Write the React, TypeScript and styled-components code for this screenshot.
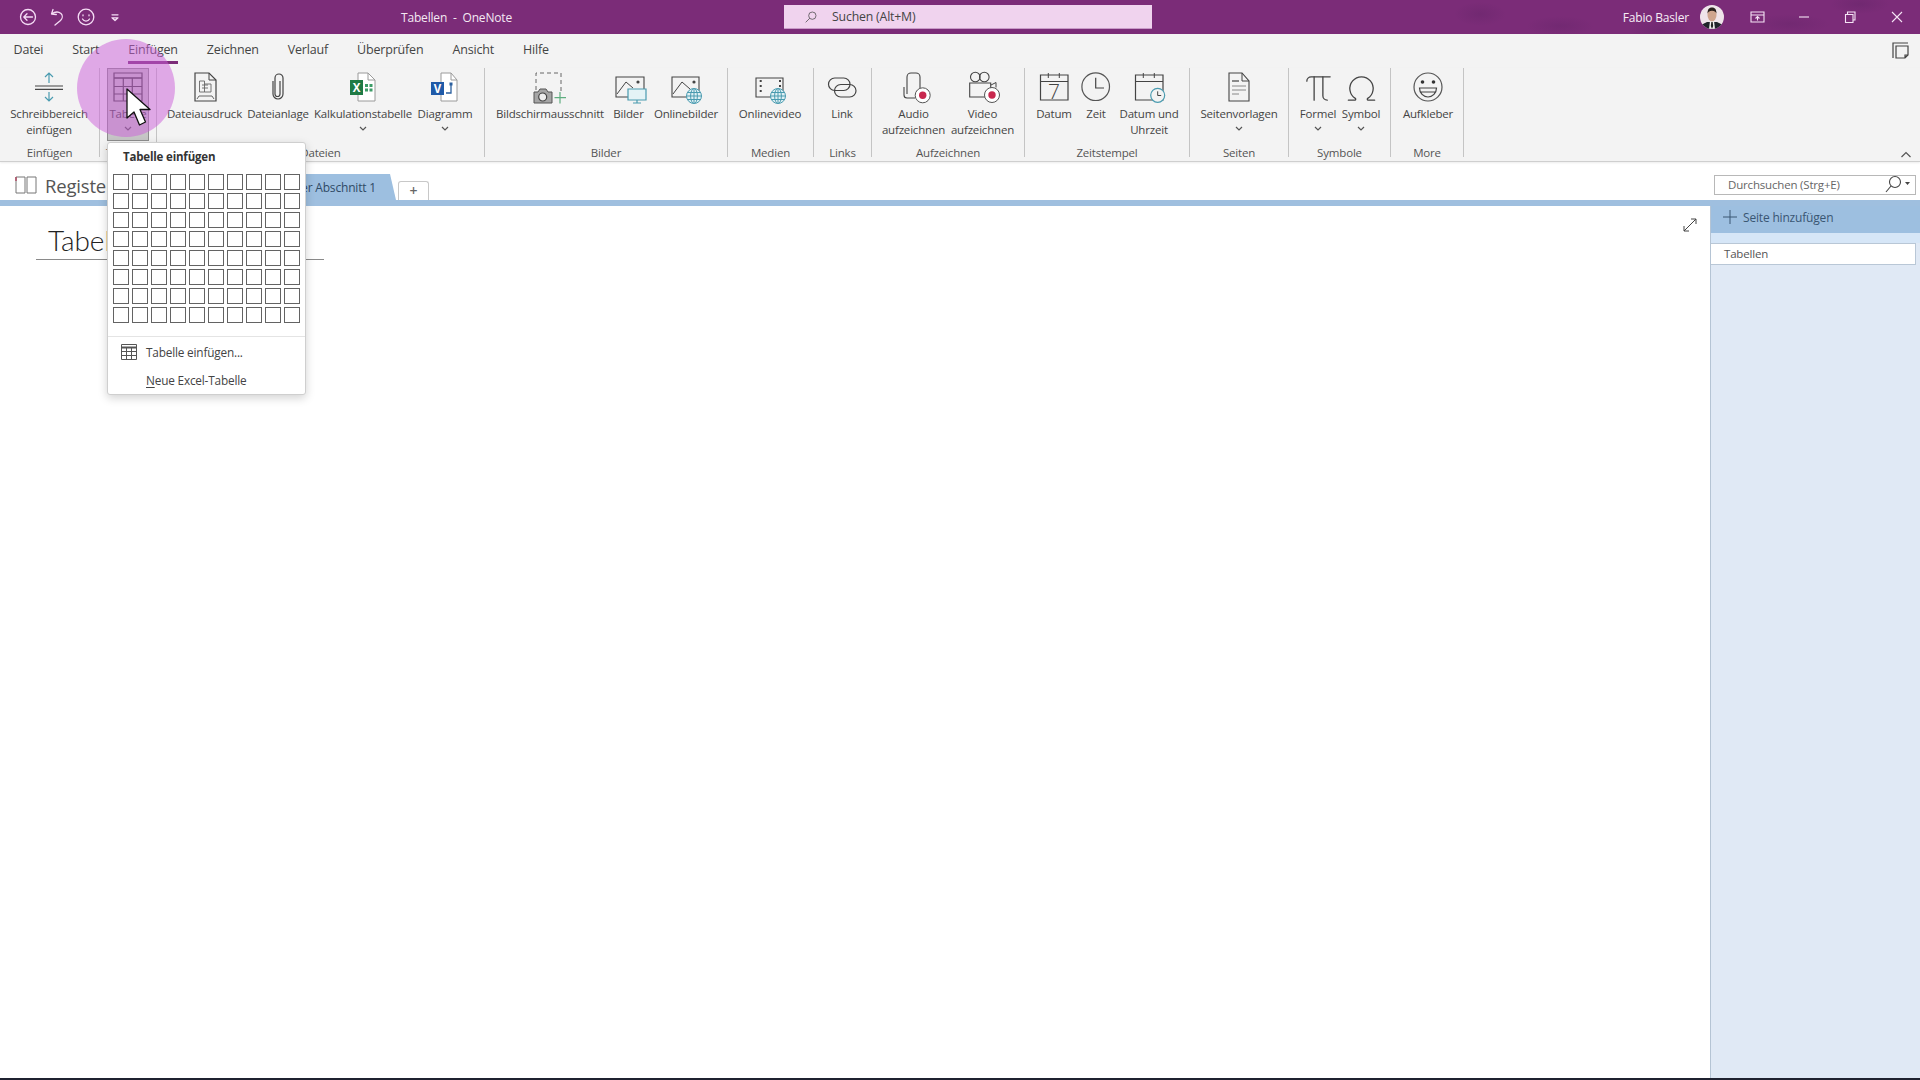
import React from "react";
import styled, { createGlobalStyle } from "styled-components";
import { Omega, Pi } from "lucide-react";

const GlobalStyle = createGlobalStyle`
  html, body {
    margin: 0;
    padding: 0;
    background: #fff;
  }
  body {
    font-family: "Open Sans", "Noto Sans", sans-serif;
    overflow: hidden;
  }
`;

const Window = styled.div`
  position: relative;
  display: flex;
  flex-direction: column;
  width: 1920px;
  height: 1080px;
  overflow: hidden;
  background: #fff;
  color: #444;
  font-size: 11.5px;
  letter-spacing: -0.18px;
`;

const TitleBar = styled.header`
  display: flex;
  align-items: center;
  flex: 0 0 34px;
  background:
    radial-gradient(ellipse 26px 12px at 1480px 14px, rgba(50, 20, 70, 0.13), transparent),
    radial-gradient(ellipse 34px 10px at 1560px 26px, rgba(50, 20, 70, 0.12), transparent),
    radial-gradient(ellipse 30px 14px at 1660px 30px, rgba(50, 20, 70, 0.14), transparent),
    radial-gradient(ellipse 40px 10px at 1790px 24px, rgba(50, 20, 70, 0.12), transparent),
    radial-gradient(ellipse 30px 10px at 1860px 4px, rgba(50, 20, 70, 0.14), transparent),
    #7b2c78;
  color: #fff;
`;

const QuickAccess = styled.div`
  display: flex;
  align-items: center;
  flex: none;
  gap: 5px;
  width: 401px;
  padding-left: 16px;
  box-sizing: border-box;
`;

const QuickIcon = styled.svg`
  width: 24px;
  height: 24px;
  fill: none;
  stroke: #f5dcf5;
  stroke-width: 1.3;
  stroke-linecap: round;
  stroke-linejoin: round;
`;

const WindowTitle = styled.div`
  flex: none;
  width: 383px;
  font-size: 12px;
  white-space: pre;
  color: #f4e9f3;
`;

const SearchBox = styled.div`
  display: flex;
  align-items: center;
  flex: none;
  gap: 13px;
  width: 368px;
  height: 24px;
  box-sizing: border-box;
  padding-left: 19px;
  background: #f0d3ee;
  border-bottom: 1px solid #c99bc8;
  color: #444;
  font-size: 12.3px;
`;

const UserArea = styled.div`
  display: flex;
  align-items: center;
  flex: none;
  margin-left: auto;
  color: #f7edf6;
  font-size: 12px;
  white-space: nowrap;
`;

const Avatar = styled.svg`
  width: 24px;
  height: 24px;
  margin-left: 11px;
  margin-right: 10px;
`;

const WindowButton = styled.svg`
  width: 46.5px;
  height: 20px;
  fill: none;
  stroke: #f5e4f5;
  stroke-width: 1.1;
`;

const TabRow = styled.nav`
  position: relative;
  display: flex;
  flex: 0 0 34px;
  gap: 29px;
  padding-left: 13.5px;
  background: #f3f3f3;
`;

const Tab = styled.div<{ $active?: boolean }>`
  position: relative;
  line-height: 31px;
  font-size: 12.5px;
  color: #444;
  &::after {
    content: "";
    display: ${(props) => (props.$active ? "block" : "none")};
    position: absolute;
    left: 0;
    right: 0;
    top: 27px;
    height: 3px;
    background: #7b2c78;
  }
`;

const NoteButton = styled.svg`
  position: absolute;
  right: 11px;
  top: 8px;
  width: 17px;
  height: 17px;
  fill: none;
  stroke: #444;
  stroke-width: 1.2;
`;

const Ribbon = styled.section`
  position: relative;
  display: flex;
  flex: 0 0 94px;
  background: #f3f3f3;
  border-bottom: 1px solid #cfcfcf;
  box-shadow: 0 1px 2px rgba(0, 0, 0, 0.08);
  box-sizing: border-box;
  z-index: 1;
`;

const Group = styled.div<{ $w: number }>`
  position: relative;
  width: ${(props) => props.$w}px;
  height: 89px;
  box-sizing: border-box;
  flex: none;
  border-right: 1px solid #c4c4c4;
`;

const Buttons = styled.div<{ $pad: number }>`
  display: flex;
  height: 73px;
  padding-left: ${(props) => props.$pad}px;
`;

const GroupLabel = styled.div`
  height: 16px;
  line-height: 16px;
  text-align: center;
  font-size: 11.5px;
  color: #555;
  margin-top: 4px;
`;

const RibbonButton = styled.div<{ $w: number; $pressed?: boolean }>`
  display: flex;
  flex-direction: column;
  align-items: center;
  flex: none;
  width: ${(props) => props.$w}px;
  height: 73px;
  box-sizing: border-box;
  text-align: center;
  line-height: 16px;
  white-space: nowrap;
  background: ${(props) => (props.$pressed ? "#c6c6c6" : "transparent")};
  outline: ${(props) => (props.$pressed ? "1px solid #8d8d8d" : "none")};
  outline-offset: -1px;
`;

const IconSlot = styled.svg`
  flex: none;
  width: 36px;
  height: 36px;
  margin: 2px 0 0;
  fill: none;
  stroke: #444;
  stroke-width: 1.2;
  overflow: visible;
`;

const LucideSlot = styled.div`
  display: flex;
  justify-content: center;
  align-items: center;
  flex: none;
  height: 36px;
  margin-top: 2px;
  color: #444;
`;

const Chevron = styled.svg`
  width: 8px;
  height: 16px;
  fill: none;
  stroke: #555;
  stroke-width: 1.2;
`;

const Collapse = styled.svg`
  position: absolute;
  right: 8px;
  bottom: 1px;
  width: 12px;
  height: 10px;
  fill: none;
  stroke: #555;
  stroke-width: 1.2;
`;

const SectionRow = styled.div`
  display: flex;
  align-items: flex-end;
  flex: 0 0 38px;
  box-sizing: border-box;
  padding-left: 14px;
  position: relative;
  background: #fff;
`;

const BookIcon = styled.svg`
  align-self: center;
  flex: none;
  width: 24px;
  height: 20px;
  margin-top: 8px;
  fill: none;
  stroke: #777;
  stroke-width: 1;
`;

const NotebookName = styled.div`
  align-self: center;
  margin-top: 8px;
  width: 181px;
  margin-left: 7px;
  font-size: 18.5px;
  color: #555;
`;

const SectionTab = styled.div`
  width: 170px;
  height: 26px;
  box-sizing: border-box;
  line-height: 27px;
  padding-right: 20px;
  text-align: right;
  background: #9dbfe0;
  color: #2f4a66;
  font-size: 12px;
  clip-path: polygon(0 0, 164px 0, 170px 26px, 0 26px);
`;

const AddTab = styled.div`
  width: 31px;
  height: 19px;
  margin-left: 2px;
  box-sizing: border-box;
  border: 1px solid #c8c8c8;
  border-bottom: none;
  border-radius: 3px 3px 0 0;
  text-align: center;
  line-height: 18px;
  font-size: 14px;
  font-weight: 600;
  color: #666;
`;

const PageSearch = styled.div`
  position: absolute;
  left: 1714px;
  top: 13px;
  display: flex;
  align-items: center;
  justify-content: space-between;
  width: 202px;
  height: 20px;
  box-sizing: border-box;
  padding: 0 2px 2px 13px;
  border: 1px solid #b8b8b8;
  font-size: 11.5px;
  color: #666;
`;

const SearchGlyph = styled.svg<{ $w: number }>`
  flex: none;
  width: ${(props) => props.$w}px;
  height: 18px;
  fill: none;
  stroke: #444;
  stroke-width: 1.1;
`;

const Stripe = styled.div`
  flex: 0 0 6px;
  background: #9fbfdf;
`;

const Content = styled.div`
  display: flex;
  flex: 1;
  min-height: 0;
`;

const PageArea = styled.main`
  position: relative;
  flex: 1;
  padding: 15px 0 0 36px;
  background: #fff;
`;

const PageTitle = styled.div`
  width: 288px;
  height: 39px;
  box-sizing: border-box;
  padding-left: 12px;
  border-bottom: 1px solid #8a8a8a;
  font-family: "Lato", "Open Sans", sans-serif;
  font-weight: 300;
  font-size: 28px;
  line-height: 39px;
  letter-spacing: 0;
  color: #222;
`;

const ExpandIcon = styled.svg`
  position: absolute;
  right: 12px;
  top: 11px;
  width: 16px;
  height: 16px;
  fill: none;
  stroke: #444;
  stroke-width: 1;
`;

const PageList = styled.aside`
  flex: 0 0 210px;
  box-sizing: border-box;
  border-left: 1px solid #b5c4d4;
  background: #e0e9f5;
`;

const AddPage = styled.div`
  display: flex;
  align-items: center;
  gap: 5px;
  height: 27px;
  box-sizing: border-box;
  padding: 0 0 5px 11px;
  background: #9dbfe0;
  color: #3a5673;
  font-size: 12px;
`;

const PageGap = styled.div`
  height: 10px;
  background: #d6e6f7;
`;

const PageItem = styled.div`
  width: 205px;
  height: 22px;
  box-sizing: border-box;
  padding-left: 13px;
  line-height: 19px;
  background: #fff;
  border: 1px solid #b9c7d6;
  border-left: none;
  color: #555;
  font-size: 11.5px;
`;

const BottomEdge = styled.div`
  flex: 0 0 2px;
  background: #1f2230;
`;

const Highlight = styled.div`
  position: absolute;
  left: 77px;
  top: 39px;
  width: 98px;
  height: 98px;
  border-radius: 50%;
  background: rgba(203, 93, 217, 0.5);
  z-index: 2;
`;

const Cursor = styled.svg`
  position: absolute;
  left: 124px;
  top: 86px;
  width: 30px;
  height: 44px;
  z-index: 3;
`;

const Popup = styled.div`
  position: absolute;
  left: 107px;
  top: 142px;
  width: 199px;
  height: 253px;
  box-sizing: border-box;
  background: #fff;
  border: 1px solid #cfcfcf;
  border-radius: 3px;
  box-shadow: 0 3px 10px rgba(0, 0, 0, 0.18);
  z-index: 4;
`;

const PopupHeading = styled.div`
  height: 31px;
  padding-left: 15px;
  line-height: 28px;
  font-size: 11.5px;
  font-weight: 700;
  color: #333;
`;

const CellGrid = styled.div`
  display: grid;
  grid-template-columns: repeat(10, 16px);
  grid-auto-rows: 16px;
  gap: 3px;
  padding-left: 5px;
`;

const Cell = styled.div`
  box-sizing: border-box;
  border: 1px solid #636363;
  background: #fff;
`;

const PopupDivider = styled.div`
  height: 1px;
  margin-top: 13px;
  background: #e4e4e4;
`;

const PopupItem = styled.div<{ $tall?: boolean }>`
  display: flex;
  align-items: center;
  height: ${(props) => (props.$tall ? 29 : 27)}px;
  padding-left: 13px;
  font-size: 11.8px;
  color: #444;
`;

const MenuIcon = styled.svg`
  width: 16px;
  height: 16px;
  margin-right: 9px;
  fill: none;
  stroke: #555;
  stroke-width: 1;
`;

const MenuText = styled.span<{ $indent?: boolean }>`
  margin-left: ${(props) => (props.$indent ? 25 : 0)}px;
  u {
    text-underline-offset: 2px;
  }
`;

const teal = "#4a9bb0";

const Reference = () => (
  <IconSlot>
    <path d="M4 16h28M4 19.300h28" strokeWidth="1.2" />
    <path d="M18 3v10M14 7l4-4 4 4M18 22v9M14 27l4 4 4-4" stroke={teal} />
  </IconSlot>
);

const TableIcon = () => (
  <IconSlot>
    <path d="M4 3h28v28H4z" />
    <path d="M4 8h28" strokeWidth="1.6" />
    <path d="M4 16.500h28M4 24h28M13.300 8v23M22.300 8v23" />
  </IconSlot>
);

const PrintoutIcon = () => (
  <IconSlot>
    <path d="M8 31V3h14l7 7v21z" />
    <path d="M22 3v7h7" strokeWidth="1" />
    <path d="M12.500 11h5v11h-5zM17.500 14h6.500v8h-6.500" strokeWidth="0.9" stroke="#666" />
    <path d="M15 15h6M15 18h6" strokeWidth="0.9" stroke="#666" />
    <path d="M10 29l2-3h13l2 3" strokeWidth="1" stroke="#666" />
  </IconSlot>
);

const ClipIcon = () => (
  <IconSlot stroke="#666">
    <path d="M13 11v13a5 5 0 0 0 10 0V8a4 4 0 0 0-8 0v16a2.500 2.500 0 0 0 5 0V11" />
  </IconSlot>
);

const ExcelIcon = () => (
  <IconSlot>
    <path d="M13 3h10l7 7v21H13z" fill="#fff" stroke="#9a9a9a" strokeWidth="1" />
    <path d="M23 3v7h7" stroke="#9a9a9a" strokeWidth="1" />
    <path d="M5 10h13v15H5z" fill="#1f7a45" stroke="none" />
    <text x="11.500" y="22" textAnchor="middle" fontSize="11.500" fontWeight="700" fill="#fff" stroke="none" fontFamily="Open Sans">
      X
    </text>
    <path d="M20 14h3v3h-3zM24.500 14h3v3h-3zM20 18.500h3v3h-3zM24.500 18.500h3v3h-3z" fill="#3c9c67" stroke="none" />
  </IconSlot>
);

const VisioIcon = () => (
  <IconSlot>
    <path d="M14 3h10l6 7v21H14z" fill="#fff" stroke="#9a9a9a" strokeWidth="1" />
    <path d="M24 3v7h6" stroke="#9a9a9a" strokeWidth="1" />
    <path d="M4 12h13v13H4z" fill="#1f5aa8" stroke="none" />
    <text x="10.500" y="23" textAnchor="middle" fontSize="11.500" fontWeight="700" fill="#fff" stroke="none" fontFamily="Open Sans">
      V
    </text>
    <path d="M19 23h5v-8" stroke="#2a5f9e" strokeWidth="1.300" />
    <path d="M22.500 12.500h3v3h-3z" fill="#2a5f9e" stroke="none" />
  </IconSlot>
);

const ScreenClipIcon = () => (
  <IconSlot>
    <path d="M4 20V3h25v18" strokeDasharray="4 3" stroke="#666" strokeWidth="1" />
    <path d="M2 22h4l2-3h6l2 3h4v11H2z" fill="#a5a5a5" stroke="#555" strokeWidth="1" />
    <circle cx="10.700" cy="27" r="4" fill="#eee" stroke="#444" />
    <path d="M28 22v11.500M22.500 27.700h11.500" stroke="#5fae80" />
  </IconSlot>
);

const PictureIcon = () => (
  <IconSlot>
    <path d="M5 7h28v20H5z" strokeWidth="1.100" />
    <path d="M6 24l9-12 7 6" strokeWidth="1" />
    <circle cx="27" cy="12" r="1.600" fill="#444" stroke="none" />
    <path d="M17 19h18v11H17z" fill="#e4f3f6" stroke={teal} />
    <path d="M26 30v3M22 33h8" stroke={teal} />
  </IconSlot>
);

const Globe = ({ cx, cy }: { cx: number; cy: number }) => (
  <g stroke={teal} strokeWidth="1" fill="#dff0f4">
    <circle cx={cx} cy={cy} r="7.500" />
    <ellipse cx={cx} cy={cy} rx="3.400" ry="7.500" />
    <path d={`M${cx} ${cy - 7.5}v15M${cx - 7.5} ${cy}h15M${cx - 6.5} ${cy - 3.5}h13M${cx - 6.5} ${cy + 3.5}h13`} />
  </g>
);

const OnlinePictureIcon = () => (
  <IconSlot>
    <path d="M4 7h27v20H4z" strokeWidth="1.100" />
    <path d="M5 24l9-12 8 7" strokeWidth="1" />
    <circle cx="26" cy="12" r="1.600" fill="#444" stroke="none" />
    <Globe cx={26} cy={26} />
  </IconSlot>
);

const OnlineVideoIcon = () => (
  <IconSlot>
    <path d="M4 8h27v19H4z" strokeWidth="1.100" />
    <path d="M8.700 10v15M28 10v7" strokeDasharray="2 3" strokeWidth="2" />
    <Globe cx={26} cy={26} />
  </IconSlot>
);

const LinkIcon = () => (
  <IconSlot stroke="#555">
    <rect x="4.500" y="8" width="21.500" height="12.500" rx="6.250" />
    <rect x="10.500" y="14.500" width="21.500" height="12.500" rx="6.250" />
  </IconSlot>
);

const RecordDot = ({ cx, cy }: { cx: number; cy: number }) => (
  <g>
    <circle cx={cx} cy={cy} r="7.500" fill="#fff" stroke="#555" strokeWidth="1" />
    <circle cx={cx} cy={cy} r="3.700" fill="#c8284e" stroke="none" />
  </g>
);

const AudioIcon = () => (
  <IconSlot>
    <path d="M11 24V7a4 4 0 0 1 4-4h5a4 4 0 0 1 4 4v12" strokeWidth="1.100" />
    <path d="M8 17v8a3 3 0 0 0 3 3h8" strokeWidth="1.100" />
    <RecordDot cx={26.7} cy={25.3} />
  </IconSlot>
);

const VideoIcon = () => (
  <IconSlot>
    <circle cx="10.300" cy="7" r="4.800" strokeWidth="1.100" />
    <circle cx="19.300" cy="7" r="4.800" strokeWidth="1.100" />
    <path d="M4.700 13h21v14h-21z" strokeWidth="1.100" />
    <path d="M26 15l5-2.500v5" strokeWidth="1" />
    <RecordDot cx={27} cy={25} />
  </IconSlot>
);

const CalendarFrame = () => (
  <>
    <path d="M4.500 5h27.500v25H4.500z" strokeWidth="1.200" />
    <path d="M4.500 11.500h27.500M12.300 3v5M23.300 3v5" strokeWidth="1" />
  </>
);

const DateIcon = () => (
  <IconSlot>
    <CalendarFrame />
    <text x="18" y="28.500" textAnchor="middle" fontSize="21" fontWeight="300" fill="#444" stroke="none" fontFamily="Open Sans">
      7
    </text>
  </IconSlot>
);

const ClockIcon = () => (
  <IconSlot>
    <circle cx="17.700" cy="16.700" r="13.800" stroke="#555" />
    <path d="M17.700 7.700V18H26" />
  </IconSlot>
);

const DateTimeIcon = () => (
  <IconSlot>
    <CalendarFrame />
    <circle cx="26.700" cy="25.300" r="7" fill="#f3f3f3" stroke={teal} strokeWidth="1.200" />
    <path d="M26.700 21.300v4.200h3.500" strokeWidth="1" />
  </IconSlot>
);

const TemplateIcon = () => (
  <IconSlot>
    <path d="M8 3h13l7 8v20H8z" strokeWidth="1.100" />
    <path d="M21 3v8h7" strokeWidth="1" />
    <path d="M11 11h7" strokeWidth="2" stroke="#888" />
    <path d="M11 16h14M11 20h14M11 24h7" strokeWidth="1" stroke="#888" />
  </IconSlot>
);

const StickerIcon = () => (
  <IconSlot>
    <circle cx="18" cy="17" r="14" stroke="#555" />
    <circle cx="12.500" cy="12" r="1.800" fill="#333" stroke="none" />
    <circle cx="23.500" cy="12" r="1.800" fill="#333" stroke="none" />
    <path d="M9.500 18h17c0 5-4 9-8.500 9s-8.500-4-8.500-9zM11 22h14" strokeWidth="1.200" />
  </IconSlot>
);

const Drop = () => (
  <Chevron viewBox="0 0 8 16">
    <path d="M1 5l3 3 3-3" />
  </Chevron>
);

const Omegas = () => (
  <LucideSlot>
    <Omega size={35} strokeWidth={0.9} />
  </LucideSlot>
);

const Pis = () => (
  <LucideSlot>
    <Pi size={35} strokeWidth={0.9} />
  </LucideSlot>
);

type ButtonSpec = {
  w: number;
  icon: React.ReactNode;
  label: string[];
  drop?: boolean;
  pressed?: boolean;
};

type GroupSpec = { w: number; pad: number; name: string; buttons: ButtonSpec[] };

const groups: GroupSpec[] = [
  { w: 100, pad: 8, name: "Einfügen", buttons: [{ w: 82, icon: <Reference />, label: ["Schreibbereich", "einfügen"] }] },
  { w: 57, pad: 7, name: "Tabellen", buttons: [{ w: 42, icon: <TableIcon />, label: ["Tabelle"], drop: true, pressed: true }] },
  {
    w: 328,
    pad: 7,
    name: "Dateien",
    buttons: [
      { w: 81, icon: <PrintoutIcon />, label: ["Dateiausdruck"] },
      { w: 66, icon: <ClipIcon />, label: ["Dateianlage"] },
      { w: 104, icon: <ExcelIcon />, label: ["Kalkulationstabelle"], drop: true },
      { w: 60, icon: <VisioIcon />, label: ["Diagramm"], drop: true },
    ],
  },
  {
    w: 243,
    pad: 8,
    name: "Bilder",
    buttons: [
      { w: 114, icon: <ScreenClipIcon />, label: ["Bildschirmausschnitt"] },
      { w: 43, icon: <PictureIcon />, label: ["Bilder"] },
      { w: 72, icon: <OnlinePictureIcon />, label: ["Onlinebilder"] },
    ],
  },
  { w: 86, pad: 6, name: "Medien", buttons: [{ w: 72, icon: <OnlineVideoIcon />, label: ["Onlinevideo"] }] },
  { w: 58, pad: 8, name: "Links", buttons: [{ w: 40, icon: <LinkIcon />, label: ["Link"] }] },
  {
    w: 153,
    pad: 7,
    name: "Aufzeichnen",
    buttons: [
      { w: 69, icon: <AudioIcon />, label: ["Audio", "aufzeichnen"] },
      { w: 69, icon: <VideoIcon />, label: ["Video", "aufzeichnen"] },
    ],
  },
  {
    w: 165,
    pad: 8,
    name: "Zeitstempel",
    buttons: [
      { w: 42, icon: <DateIcon />, label: ["Datum"] },
      { w: 42, icon: <ClockIcon />, label: ["Zeit"] },
      { w: 64, icon: <DateTimeIcon />, label: ["Datum und", "Uhrzeit"] },
    ],
  },
  { w: 99, pad: 7, name: "Seiten", buttons: [{ w: 84, icon: <TemplateIcon />, label: ["Seitenvorlagen"], drop: true }] },
  {
    w: 102,
    pad: 8,
    name: "Symbole",
    buttons: [
      { w: 42, icon: <Pis />, label: ["Formel"], drop: true },
      { w: 44, icon: <Omegas />, label: ["Symbol"], drop: true },
    ],
  },
  { w: 73, pad: 6, name: "More", buttons: [{ w: 62, icon: <StickerIcon />, label: ["Aufkleber"] }] },
];

const tabs = ["Datei", "Start", "Einfügen", "Zeichnen", "Verlauf", "Überprüfen", "Ansicht", "Hilfe"];

const App = () => {
  return (
    <Window>
      <GlobalStyle />
      <TitleBar>
        <QuickAccess>
          <QuickIcon viewBox="0 0 24 24">
            <circle cx="12" cy="12" r="7.500" />
            <path d="M16.500 12H8M11 8.800L7.800 12l3.200 3.200" />
          </QuickIcon>
          <QuickIcon viewBox="0 0 24 24">
            <path d="M8 4.500L6.500 9l4.800.5M6.500 9c3-2 7-2.500 9.500-.5 2 2 1.500 5-.5 7L10 20" />
          </QuickIcon>
          <QuickIcon viewBox="0 0 24 24">
            <circle cx="12" cy="12" r="7.800" />
            <path d="M9 9.800v1M15 9.800v1M8.500 14c1.500 2.800 5.500 2.800 7 0" />
          </QuickIcon>
          <QuickIcon viewBox="0 0 24 24">
            <path d="M9 9.800h6M9 12.800h6l-3 2.800z" />
          </QuickIcon>
        </QuickAccess>
        <WindowTitle>{"Tabellen  -  OneNote"}</WindowTitle>
        <SearchBox>
          <SearchGlyph $w={16} viewBox="0 0 24 18">
            <circle cx="14" cy="7" r="5.500" />
            <path d="M10 11l-6 6" />
          </SearchGlyph>
          Suchen (Alt+M)
        </SearchBox>
        <UserArea>
          Fabio Basler
          <Avatar viewBox="0 0 24 24">
            <clipPath id="avatar-clip">
              <circle cx="12" cy="12" r="12" />
            </clipPath>
            <g clipPath="url(#avatar-clip)">
              <rect width="24" height="24" fill="#efe4ea" />
              <path d="M1 24v-4l6-3h10l6 3v4z" fill="#20242b" />
              <path d="M10 16h4l1 8h-6z" fill="#f2f2f2" />
              <path d="M11.300 17h1.400l.5 4-1.200 3-1.200-3z" fill="#222" />
              <ellipse cx="12" cy="10" rx="4.500" ry="6.500" fill="#cfa58e" />
              <path d="M7.500 8.500C7.500 4 9.500 2.500 12 2.500s4.500 1.500 4.500 6c-1-2-2-2.800-4.500-2.800S8.500 6.500 7.500 8.500z" fill="#2a211d" />
            </g>
          </Avatar>
          <WindowButton viewBox="0 0 46.500 20">
            <path d="M17 5h13v10H17zM17 8h13M23.500 13.500V9.500M21.500 11.500l2-2 2 2" />
          </WindowButton>
          <WindowButton viewBox="0 0 46.500 20">
            <path d="M18 10h10" />
          </WindowButton>
          <WindowButton viewBox="0 0 46.500 20">
            <path d="M18.500 7.500h7.500v8h-7.500zM20.500 7.500V5h7.500v8h-2" />
          </WindowButton>
          <WindowButton viewBox="0 0 46.500 20">
            <path d="M18 5l10 10M28 5L18 15" />
          </WindowButton>
        </UserArea>
      </TitleBar>
      <TabRow>
        {tabs.map((tab) => (
          <Tab key={tab} $active={tab === "Einfügen"}>
            {tab}
          </Tab>
        ))}
        <NoteButton viewBox="0 0 17 17">
          <path d="M1 16V1h15" />
          <path d="M4 4h12v9l-3 3H4zM16 13h-3v3" />
        </NoteButton>
      </TabRow>
      <Ribbon>
        {groups.map((group) => (
          <Group key={group.name} $w={group.w}>
            <Buttons $pad={group.pad}>
              {group.buttons.map((button) => (
                <RibbonButton key={button.label[0]} $w={button.w} $pressed={button.pressed}>
                  {button.icon}
                  {button.label.map((text) => (
                    <span key={text}>{text}</span>
                  ))}
                  {button.drop && <Drop />}
                </RibbonButton>
              ))}
            </Buttons>
            <GroupLabel>{group.name}</GroupLabel>
          </Group>
        ))}
        <Collapse viewBox="0 0 12 10">
          <path d="M1.500 7L6 2.500 10.500 7" />
        </Collapse>
      </Ribbon>
      <SectionRow>
        <BookIcon viewBox="0 0 24 20">
          <path d="M2 2h9v16H2zM13 2h9v16h-9z" />
          <path d="M2 2v4" stroke="#b04a63" strokeWidth="1.500" />
        </BookIcon>
        <NotebookName>Register</NotebookName>
        <SectionTab>Neuer Abschnitt 1</SectionTab>
        <AddTab>+</AddTab>
        <PageSearch>
          Durchsuchen (Strg+E)
          <SearchGlyph $w={28} viewBox="0 0 28 18">
            <circle cx="10" cy="7" r="5.500" />
            <path d="M6 11l-5 6" />
            <path d="M20 7h5l-2.500 3z" fill="#444" stroke="none" />
          </SearchGlyph>
        </PageSearch>
      </SectionRow>
      <Stripe />
      <Content>
        <PageArea>
          <PageTitle>Tabellen</PageTitle>
          <ExpandIcon viewBox="0 0 16 16">
            <path d="M2 14L14 2M9 2h5v5M2 9v5h5" />
          </ExpandIcon>
        </PageArea>
        <PageList>
          <AddPage>
            <svg width="16" height="16" viewBox="0 0 16 16" fill="none" stroke="#3a5673" strokeWidth="1">
              <path d="M8 1v14M1 8h14" />
            </svg>
            Seite hinzufügen
          </AddPage>
          <PageGap />
          <PageItem>Tabellen</PageItem>
        </PageList>
      </Content>
      <BottomEdge />
      <Highlight />
      <Cursor viewBox="0 0 30 44">
        <path d="M3 3l0 29 7-6 5.500 13 6-3-5.500-12.500 10 0z" fill="#fff" stroke="#111" strokeWidth="1.300" strokeLinejoin="round" />
      </Cursor>
      <Popup>
        <PopupHeading>Tabelle einfügen</PopupHeading>
        <CellGrid>
          {Array.from({ length: 80 }, (_, index) => (
            <Cell key={index} />
          ))}
        </CellGrid>
        <PopupDivider />
        <PopupItem $tall>
          <MenuIcon viewBox="0 0 16 16">
            <path d="M.5.500h15v15H.5z" />
            <path d="M.5 3.500h15" strokeWidth="2" />
            <path d="M.5 7.500h15M.5 11.500h15M5.500 3.500v12M10.500 3.500v12" />
          </MenuIcon>
          <MenuText>Tabelle einfügen...</MenuText>
        </PopupItem>
        <PopupItem>
          <MenuText $indent>
            <u>N</u>eue Excel-Tabelle
          </MenuText>
        </PopupItem>
      </Popup>
    </Window>
  );
};

export default App;
